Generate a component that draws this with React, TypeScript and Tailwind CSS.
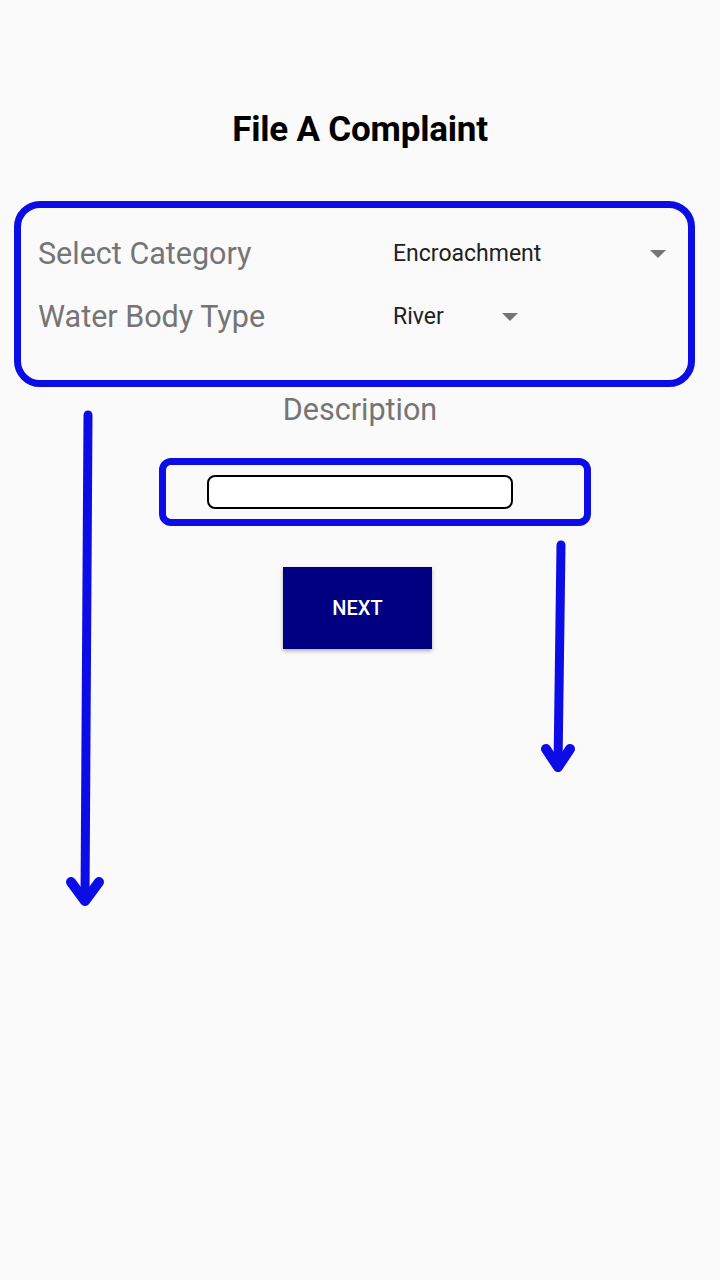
import { useState } from 'react'

const annotationBlue = 'border-[#0c0ce6]'

function Caret() {
  return (
    <svg width="16" height="8" viewBox="0 0 16 8" className="shrink-0">
      <path d="M0 0h16L8 8z" fill="#757575" />
    </svg>
  )
}

export default function App() {
  const [description, setDescription] = useState('')

  return (
    <div
      className="relative min-h-screen bg-[#fafafa] overflow-hidden"
      style={{ fontFamily: 'Roboto, "Noto Sans", sans-serif' }}
    >
      {/* Title */}
      <h1 className="pt-[110px] text-center text-[35px] leading-[40px] font-bold text-black tracking-[-0.2px]">
        File A Complaint
      </h1>

      {/* Category + water body (annotated) */}
      <div className={`mt-[51px] ml-[14px] w-[681px] h-[186px] border-[7px] ${annotationBlue} rounded-[26px] pt-[22px] pl-[17px] pr-[22px] flex flex-col gap-[15px]`}>
        <div className="flex items-center h-[48px]">
          <span className="w-[355px] text-[30.5px] text-[#757575]">Select Category</span>
          <div className="flex-1 flex items-center justify-between">
            <span className="text-[23px] text-[#212121]">Encroachment</span>
            <Caret />
          </div>
        </div>
        <div className="flex items-center h-[48px]">
          <span className="w-[355px] text-[30.5px] text-[#757575]">Water Body Type</span>
          <div className="w-[125px] flex items-center justify-between">
            <span className="text-[23px] text-[#212121]">River</span>
            <Caret />
          </div>
        </div>
      </div>

      {/* Description */}
      <p className="mt-[5px] text-center text-[30.5px] leading-[36px] text-[#757575]">Description</p>

      <div className={`mt-[30px] ml-[159px] w-[432px] h-[68px] border-[7px] ${annotationBlue} rounded-[12px] pl-[41px] pt-[10px]`}>
        <input
          value={description}
          onChange={e => setDescription(e.target.value)}
          className="block w-[306px] h-[34px] bg-white border-2 border-black rounded-[8px] px-2 text-[18px] outline-none"
        />
      </div>

      <button className="mt-[41px] ml-[283px] w-[149px] h-[82px] bg-[#000080] text-white text-[20px] font-medium shadow-[0_2px_4px_rgba(0,0,0,0.3)]">
        NEXT
      </button>

      {/* Hand-drawn arrows */}
      <svg className="absolute inset-0 pointer-events-none" width="720" height="1280" viewBox="0 0 720 1280">
        <g stroke="#0c0ce6" strokeWidth="9" strokeLinecap="round" strokeLinejoin="round" fill="none">
          <path d="M88 415 L85 900" />
          <path d="M71 882 L85 901 L99 882" strokeWidth="10" />
          <path d="M561 545 L558 767" />
          <path d="M546 749 L558 767 L570 749" strokeWidth="10" />
        </g>
      </svg>
    </div>
  )
}
